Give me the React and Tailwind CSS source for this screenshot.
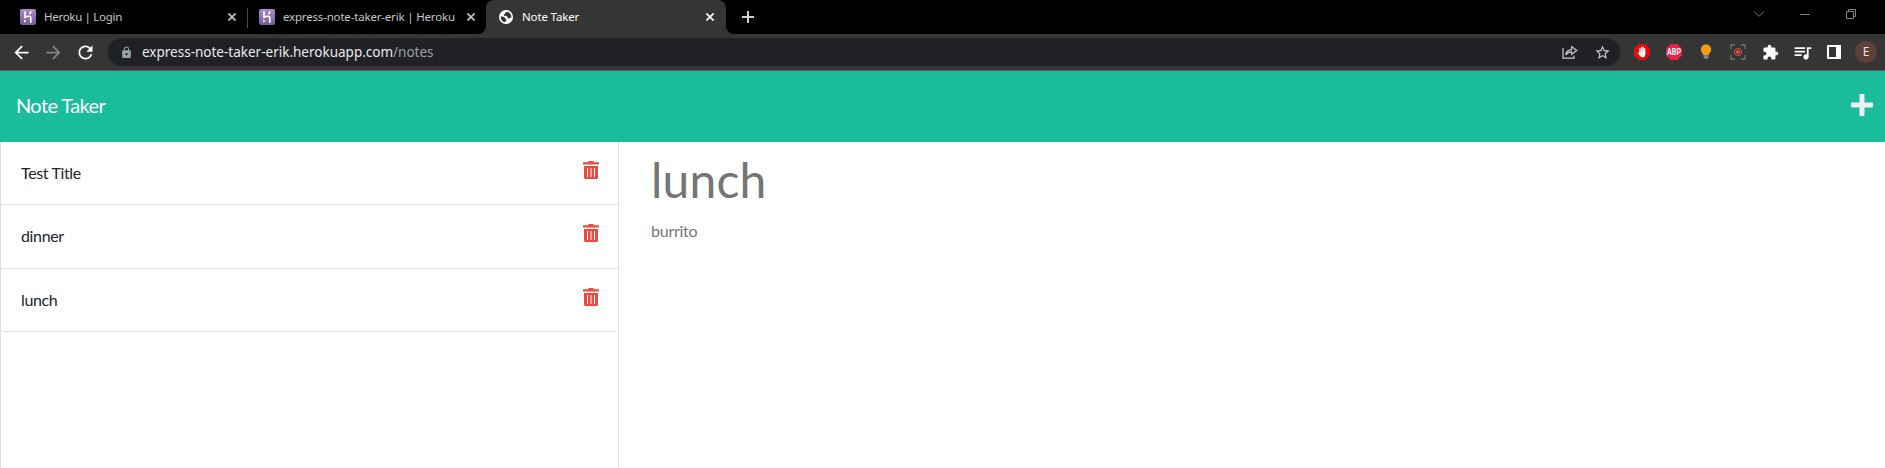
import React from "react";
import {
  MdArrowBack,
  MdArrowForward,
  MdRefresh,
  MdLock,
  MdExtension,
  MdStarBorder,
  MdQueueMusic,
} from "react-icons/md";

function HerokuIcon() {
  return (
    <svg width="16" height="16" viewBox="0 0 16 16" className="shrink-0">
      <defs>
        <linearGradient id="heroku" x1="0" y1="0" x2="0" y2="1">
          <stop offset="0" stopColor="#a88bc9" />
          <stop offset="1" stopColor="#79589f" />
        </linearGradient>
      </defs>
      <rect width="16" height="16" rx="2" fill="url(#heroku)" />
      <path d="M5 2.2V8.3C6.5 7.5 10.8 6.3 10.8 8.6V13.8M10.8 2.2C10.8 3.6 10.2 4.4 9.4 5.2" fill="none" stroke="#fff" strokeWidth="1.7" />
      <path d="M4.2 10.4L6.5 12.1L4.2 13.8Z" fill="#fff" />
    </svg>
  );
}

function GlobeIcon() {
  return (
    <svg width="14" height="14" viewBox="0 0 14 14" className="shrink-0">
      <circle cx="7" cy="7" r="7" fill="#fff" />
      <path d="M8.3 1.8C6.8 2.1 5.9 2.9 6.2 3.7C4.9 4 4.6 5 5.1 5.7C6.2 6.4 7.6 5.7 8.3 6.6C8.9 7.5 8.4 8.3 9.6 8.5C10.7 8.6 11.4 7.5 12.4 7.6C12.5 4.7 10.9 2.5 8.3 1.8ZM1.6 6.6C3.2 6.6 6 6.9 6.1 8.2C6.3 9.3 7.8 9 7.7 10.1C7.5 11.1 6.2 11 6.1 12.3C3.4 12 1.5 9.8 1.6 6.6Z" fill="#353535" />
    </svg>
  );
}

function CloseIcon({ color }) {
  return (
    <svg width="8" height="8" viewBox="0 0 8 8" className="shrink-0" stroke={color} strokeWidth="1.6">
      <path d="M.4.4l7.2 7.2M7.6.4L.4 7.6" />
    </svg>
  );
}

function Slot({ children }) {
  return <div className="flex h-7 w-8 shrink-0 items-center justify-center">{children}</div>;
}

function TabBar() {
  return (
    <div className="flex h-[34px] bg-black font-['Noto_Sans','Open_Sans',sans-serif] text-[12px] text-[#c4c6c9]">
      <div className="flex w-[247px] items-center pr-[11px] pl-5">
        <HerokuIcon />
        <span className="ml-2 flex-1 text-[11.5px] tracking-[-0.3px] whitespace-nowrap">Heroku | Login</span>
        <CloseIcon color="#c4c6c9" />
      </div>
      <div className="mt-2 h-5 w-px bg-[#4a4a4a]" />
      <div className="flex w-[238px] items-center pr-[11px] pl-[11px]">
        <HerokuIcon />
        <span className="ml-2 flex-1 text-[11.5px] tracking-[-0.18px] whitespace-nowrap">express-note-taker-erik | Heroku</span>
        <CloseIcon color="#c4c6c9" />
      </div>
      <div className="relative flex w-[240px] items-center rounded-t-[8px] bg-[#353535] pr-3 pl-[13px] text-white">
        <svg className="absolute bottom-0 -left-2" width="8" height="8"><path d="M8 0V8H0A8 8 0 0 0 8 0Z" fill="#353535" /></svg>
        <svg className="absolute -right-2 bottom-0" width="8" height="8"><path d="M0 0V8H8A8 8 0 0 1 0 0Z" fill="#353535" /></svg>
        <GlobeIcon />
        <span className="ml-[9px] flex-1 text-[11.5px] tracking-[-0.15px] whitespace-nowrap">Note Taker</span>
        <CloseIcon color="#ffffff" />
      </div>
      <div className="flex flex-1 items-center pl-4">
        <svg width="12" height="12" stroke="#d0d0d0" strokeWidth="2"><path d="M6 0V12M0 6H12" /></svg>
      </div>
      <div className="flex h-7 w-[149px] items-center pl-[18px]">
        <svg width="10" height="6" fill="none" stroke="#777"><path d="M.3.5L5 5.3L9.7.5" /></svg>
        <div className="ml-[36px] h-px w-[10px] bg-[#7a7a7a]" />
        <svg className="ml-[36px]" width="10" height="10" fill="none" stroke="#858585"><path d="M.5 2.5H7.5V9.5H.5ZM2.5 2.5V.5H9.5V7.5H7.5" /></svg>
      </div>
    </div>
  );
}

function Toolbar() {
  return (
    <div className="flex h-[37px] border-b border-[#5f5f5f] bg-[#353535] pt-1 pl-[5px] font-['Noto_Sans','Open_Sans',sans-serif]">
      <Slot><MdArrowBack size={21} color="#fff" /></Slot>
      <Slot><MdArrowForward size={21} color="#868686" /></Slot>
      <Slot><MdRefresh size={21} color="#fff" /></Slot>
      <div className="ml-[7px] flex h-7 w-[1512px] items-center rounded-full bg-[#202124] pl-[12px]">
        <MdLock size={13} color="#9aa0a6" />
        <span className="ml-[9px] flex-1 text-[13.5px] whitespace-nowrap text-[#e8eaed]">
          express-note-taker-erik.herokuapp.com<span className="text-[#9aa0a6]">/notes</span>
        </span>
        <Slot>
          <svg width="16" height="14" viewBox="0 0 16 14" fill="none" stroke="#c8cacc" strokeWidth="1.2">
            <path d="M1 3V13.2H12V10.8M3.7 9.8C4.2 6.5 6.4 4.8 9.7 4.6V1.6L14.8 5.5L9.7 9.3V6.8C7 6.8 5.3 7.6 3.7 9.8Z" />
          </svg>
        </Slot>
        <Slot><MdStarBorder size={17} color="#c8cacc" /></Slot>
        <div className="w-[2px]" />
      </div>
      <div className="w-[6px]" />
      <Slot>
        <svg width="16" height="16" viewBox="0 0 16 16">
          <path d="M4.7 0H11.3L16 4.7V11.3L11.3 16H4.7L0 11.3V4.7Z" fill="#e40d0d" />
          <path d="M6 8.4V4.7M7.6 7.6V3.3M9.2 7.6V3.3M10.7 9V4.8" stroke="#fff" strokeWidth="1.3" strokeLinecap="round" />
          <path d="M5.4 7.4H11.3V10.2C11.3 12.2 10.2 13.3 8.7 13.3C6.9 13.3 6 12 3.9 9.2C4.1 8.3 5 8.5 5.4 9.2Z" fill="#fff" />
        </svg>
      </Slot>
      <Slot>
        <svg width="16" height="16" viewBox="0 0 16 16" className="overflow-visible">
          <path d="M4.7 0H11.3L16 4.7V11.3L11.3 16H4.7L0 11.3V4.7Z" fill="#ed1e45" />
          <text x="8" y="11.2" textAnchor="middle" textLength="14" lengthAdjust="spacingAndGlyphs" fontSize="9" fontWeight="700" fontFamily="Roboto, sans-serif" fill="#fff">ABP</text>
        </svg>
      </Slot>
      <Slot>
        <svg width="12" height="16" viewBox="0 0 12 16">
          <path d="M6 .2A5.2 5.2 0 0 0 .8 5.4C.8 8 3 9 3.3 11.3H8.7C9 9 11.2 8 11.2 5.4A5.2 5.2 0 0 0 6 .2Z" fill="#f59c12" />
          <path d="M3.6 11.3H8.4V13.3L7.2 14.8H4.8L3.6 13.3Z" fill="#7b8a8d" />
        </svg>
      </Slot>
      <Slot>
        <svg width="16" height="16" viewBox="0 0 16 16" fill="none">
          <path d="M.9 5V.9H5M11 .9H15.1V5M15.1 11V15.1H11M5 15.1H.9V11" stroke="#666" strokeWidth="1.6" />
          <circle cx="8" cy="8" r="3.6" stroke="#e34f43" strokeWidth="1" />
          <circle cx="8" cy="8" r="2" fill="#e34f43" />
        </svg>
      </Slot>
      <Slot><MdExtension size={17} color="#fff" /></Slot>
      <Slot><MdQueueMusic size={21} color="#fff" /></Slot>
      <Slot>
        <svg width="14" height="14"><path d="M0 0H14V14H0ZM2 2V12H9V2Z" fill="#fff" fillRule="evenodd" /></svg>
      </Slot>
      <div className="mt-[3px] ml-[5px] flex size-[22px] items-center justify-center rounded-full bg-[#5d4037] text-[12px] text-[#e6e2e0]">E</div>
    </div>
  );
}

function TrashIcon() {
  return (
    <svg width="16" height="18" viewBox="0 0 16 18" fill="#e74c3c">
      <path fillRule="evenodd" d="M5 1.2L5.7 0H10.3L11 1.2H16V3.5H0V1.2ZM1 5H15V16.6Q15 18 13.6 18H2.4Q1 18 1 16.6ZM4 7V16H5V7ZM7.5 7V16H8.5V7ZM11 7V16H12V7Z" />
    </svg>
  );
}

function NoteRow({ title, className }) {
  return (
    <li className={`flex items-start justify-between border-[#dfdfdf] pr-[19px] pl-5 ${className}`}>
      <span className="pt-[19px] text-[16px] leading-6 tracking-[-0.36px] text-[#212529]">{title}</span>
      <button aria-label="Delete" className="pt-[19px]"><TrashIcon /></button>
    </li>
  );
}

export default function App() {
  return (
    <div className="flex h-[468px] w-[1885px] flex-col overflow-hidden bg-white font-['Lato',sans-serif]">
      <TabBar />
      <Toolbar />
      <header className="flex h-[71px] shrink-0 items-center justify-between bg-[#1abc9c] pr-3 pl-4">
        <h1 className="mb-[3px] text-[20px] tracking-[-0.6px] text-white">Note Taker</h1>
        <svg className="mb-[3px]" width="22" height="22" fill="#ecf0f1">
          <path d="M9.5 0H12.5Q13.5 0 13.5 1V8.5H21Q22 8.5 22 9.5V12.5Q22 13.5 21 13.5H13.5V21Q13.5 22 12.5 22H9.5Q8.5 22 8.5 21V13.5H1Q0 13.5 0 12.5V9.5Q0 8.5 1 8.5H8.5V1Q8.5 0 9.5 0Z" />
        </svg>
      </header>
      <main className="flex flex-1">
        <aside className="w-[619px] border-x border-[#dfdfdf]">
          <ul>
            <NoteRow title="Test Title" className="h-[63px] border-b" />
            <NoteRow title="dinner" className="h-16 border-b" />
            <NoteRow title="lunch" className="h-[63px] rounded-b-[4px] border-b" />
          </ul>
        </aside>
        <section className="px-8 text-[#757575]">
          <h2 className="mt-[9px] text-[48px] leading-[58px] tracking-[0.2px]">lunch</h2>
          <p className="mt-[10px] text-[16px] leading-6 tracking-[-0.25px]">burrito</p>
        </section>
      </main>
    </div>
  );
}
